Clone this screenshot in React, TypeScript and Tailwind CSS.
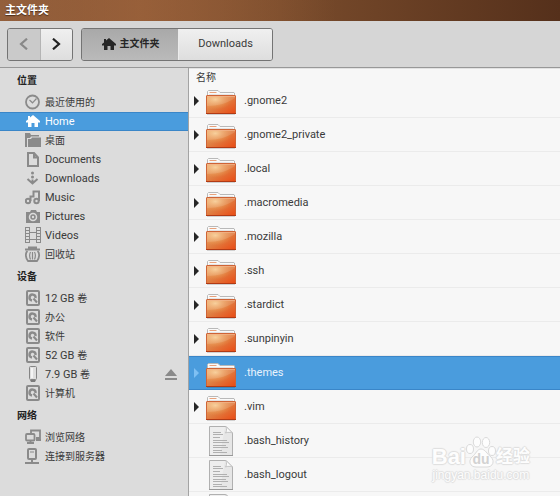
import type { ReactNode } from 'react';

const ICON = '#8a8a8a';

type Kind =
  | 'recent' | 'home' | 'desktop' | 'document' | 'download' | 'music' | 'camera'
  | 'video' | 'trash' | 'disk' | 'usb' | 'network' | 'server';

function HomeShape() {
  return <path fill="currentColor" d="M8 2 5 4.600V3H3v3.400L1 8v1.500h2V14h3.500v-4h3v4H13V9.500h2V8z" />;
}

const shapes: Record<Kind, ReactNode> = {
  recent: (
    <g fill="none">
      <circle cx="7.500" cy="8" r="6.500" stroke={ICON} strokeWidth="1.800" />
      <path d="M4.500 6 7.500 8.800 11.500 4.500" stroke={ICON} strokeWidth="1.200" />
    </g>
  ),
  home: <HomeShape />,
  desktop: <path fill={ICON} d="M0 1h5l1 2h8v1.500H6L5 6H2v9H0zM3 7h3l1-1.500h9V15H3z" />,
  document: <path fill="none" stroke={ICON} strokeWidth="2" d="M3 2h6l4 4.500V15H3zM9 2v4.500h4" />,
  download: (
    <g fill="none" stroke={ICON} strokeWidth="2">
      <circle cx="7.500" cy="3" r="1.500" fill={ICON} stroke="none" />
      <circle cx="7.500" cy="7" r="1.500" fill={ICON} stroke="none" />
      <path d="M2.500 9 7.500 13.500 12.500 9M7.500 9.500v4" />
    </g>
  ),
  music: (
    <g fill="none" stroke={ICON} strokeWidth="2">
      <circle cx="3" cy="12" r="2.200" />
      <circle cx="11.500" cy="12" r="2.200" />
      <path d="M5.500 12V7.500h3v-5H14V12" />
    </g>
  ),
  camera: (
    <g>
      <path fill={ICON} d="M1 4h4l1-2h5l1 2h3v11H1z" />
      <circle cx="8" cy="9" r="3.500" fill="none" stroke="#dcdcdc" strokeWidth="1.500" />
      <circle cx="8" cy="9" r="1.200" fill="#dcdcdc" />
    </g>
  ),
  video: (
    <g fill="none" stroke={ICON}>
      <path d="M.5 0v16M4.500 0v16M11.500 0v16M15.500 0v16M5 5.500h6M5 12.500h6" />
      <path d="M2.500 0v16M13.500 0v16" strokeWidth="3" strokeDasharray="1 2" />
    </g>
  ),
  trash: (
    <g fill="none" stroke={ICON}>
      <path d="M3 1.500h9M0 3.500h15" strokeWidth="1.800" />
      <path d="M2.500 5C0 7 .5 12 3 15h9c2.500-3 3-8 .5-10" strokeWidth="1.800" />
      <path d="M5.500 6C4.200 8.500 4.400 11 5.500 13.500M9.500 6c1.300 2.500 1.100 5 0 7.500M7.500 6v7.500" strokeWidth="1.200" />
    </g>
  ),
  disk: (
    <g fill="none">
      <rect x="2" y="1" width="12" height="14" rx="1" stroke={ICON} strokeWidth="2" />
      <path d="M7 10.500A3 3 0 1 1 10.500 8" stroke={ICON} strokeWidth="2.400" />
      <path d="M8.500 8.500 12 12.500" stroke={ICON} strokeWidth="2" />
    </g>
  ),
  usb: (
    <g>
      <rect x="4.500" y=".5" width="7" height="13" rx="1" fill="#dedede" stroke="#858585" />
      <path d="M6 2h2v10H6z" fill="#f4f4f4" />
      <path d="M5 14h6l-1 2H6z" fill="#7b7b7b" />
    </g>
  ),
  network: (
    <g fill="none" stroke={ICON} strokeWidth="1.800">
      <path d="M6 4V1.500h9V9h-4" />
      <rect x="1" y="5" width="8.500" height="6.500" rx="1" />
      <path d="M2 14h7M5.500 11.500V14M11 11h5" />
    </g>
  ),
  server: (
    <g fill="none" stroke={ICON}>
      <rect x="3" y="1" width="8" height="10" rx="1" strokeWidth="2" />
      <path d="M5 4h4" />
      <path d="M7 11v4M0 15h14" strokeWidth="2" />
    </g>
  ),
};

type Place = { kind: Kind; label: string; cjk?: string; selected?: boolean; eject?: boolean };

const groups: { title: string; items: Place[] }[] = [
  {
    title: '位置',
    items: [
      { kind: 'recent', label: '', cjk: '最近使用的' },
      { kind: 'home', label: 'Home', selected: true },
      { kind: 'desktop', label: '', cjk: '桌面' },
      { kind: 'document', label: 'Documents' },
      { kind: 'download', label: 'Downloads' },
      { kind: 'music', label: 'Music' },
      { kind: 'camera', label: 'Pictures' },
      { kind: 'video', label: 'Videos' },
      { kind: 'trash', label: '', cjk: '回收站' },
    ],
  },
  {
    title: '设备',
    items: [
      { kind: 'disk', label: '12 GB ', cjk: '卷' },
      { kind: 'disk', label: '', cjk: '办公' },
      { kind: 'disk', label: '', cjk: '软件' },
      { kind: 'disk', label: '52 GB ', cjk: '卷' },
      { kind: 'usb', label: '7.9 GB ', cjk: '卷', eject: true },
      { kind: 'disk', label: '', cjk: '计算机' },
    ],
  },
  {
    title: '网络',
    items: [
      { kind: 'network', label: '', cjk: '浏览网络' },
      { kind: 'server', label: '', cjk: '连接到服务器' },
    ],
  },
];

const folders = ['.gnome2', '.gnome2_private', '.local', '.macromedia', '.mozilla', '.ssh', '.stardict', '.sunpinyin', '.themes', '.vim'];
const files = ['.bash_history', '.bash_logout', ''];

function FolderIcon() {
  return (
    <svg className="mt-1 h-[25px] w-[30px]" viewBox="0 0 30 25" aria-hidden="true">
      <defs>
        <linearGradient id="front" x1="0" y1="0" x2="1" y2="1">
          <stop offset="0" stopColor="#eda869" />
          <stop offset=".5" stopColor="#e07c40" />
          <stop offset="1" stopColor="#ea4a14" />
        </linearGradient>
        <radialGradient id="shine" cx=".3" cy=".2" r=".6">
          <stop offset="0" stopColor="#fbd9a0" stopOpacity=".8" />
          <stop offset="1" stopColor="#f0a050" stopOpacity="0" />
        </radialGradient>
      </defs>
      <path d="M1.500 8V1.500l1-1H12l2 2h14l.5.5v5z" fill="#fafafa" stroke="#b9b9b9" />
      <path d="M3.500 2.500h7" stroke="#e8a27c" />
      <path d="M3 4.500h24" stroke="#e4e4e4" />
      <rect x=".5" y="5.500" width="29" height="18" rx=".5" fill="url(#front)" stroke="#cf6436" />
      <rect x="1" y="6" width="28" height="17" fill="url(#shine)" />
      <path d="M1 16C12 16 22 13 29 8V6H1z" fill="#fff" opacity=".12" />
      <path d="M1 6.500h28" stroke="#f3b58c" opacity=".7" />
      <path d="M0 23.500h30" stroke="#b23a14" />
      <path d="M1 24.500h28" stroke="#000" opacity=".15" />
    </svg>
  );
}

function FileIcon() {
  return (
    <svg className="mx-[3px] h-[30px] w-6" viewBox="0 0 24 30" aria-hidden="true">
      <path d="M.5.5H17L23.500 7v22.500H.5z" fill="#e6e6e6" stroke="#b0b0b0" />
      <path d="M1 1h15l-5 28H1z" fill="#f3f3f3" opacity=".6" />
      <path d="M17 .5c1 3 .5 5-.5 6.500 2-1 5-.8 7 0z" fill="#fbfbfb" stroke="#c4c4c4" />
      <path d="M4 6.500h8M4 8.500h10M4 11.500h7M4 14.500h14M4 16.500h16M4 19.500h13M4 21.500h15M4 24.500h9M4 26.500h14" stroke="#b0b0b0" />
      <path d="M0 29.500h24" stroke="#989898" />
    </svg>
  );
}

function Row({ name, folder, selected }: { name: string; folder?: boolean; selected?: boolean }) {
  return (
    <li
      className={
        selected
          ? 'flex h-[34px] items-center border-y border-[#3a86c8] bg-[#4a9cdd] pl-[5px] text-[#e8f3fc]'
          : 'flex h-[34px] items-center border-b border-[#ebebeb] pl-[5px]'
      }
    >
      <span className="flex w-3 items-center">
        {folder && (
          <button type="button" aria-label={'展开 ' + name} className={selected ? 'text-[#7fc0f3]' : 'text-[#262626]'}>
            <svg className="h-[10px] w-[5px]" viewBox="0 0 5 10" aria-hidden="true">
              <path d="M0 0 5 5 0 10z" fill="currentColor" />
            </svg>
          </button>
        )}
      </span>
      {folder ? <FolderIcon /> : <FileIcon />}
      {name && <span className="pl-2">{name}</span>}
    </li>
  );
}

function Watermark() {
  return (
    <div className="pointer-events-none absolute right-[30px] bottom-[14px] flex flex-col items-center text-[#fdfdfd] [text-shadow:1px_0_1px_#dedede,-1px_0_1px_#dedede,0_1px_1px_#dedede,0_-1px_1px_#dedede]">
      <div className="flex items-end font-['Liberation_Sans','Noto_Sans_CJK_SC',sans-serif] font-bold">
        <span className="text-[22px] leading-[22px]">Bai</span>
        <svg className="h-8 w-[30px]" viewBox="0 0 30 32" aria-hidden="true">
          <g fill="#fdfdfd" stroke="#dadada">
            <ellipse cx="4" cy="13" rx="3.500" ry="4.500" />
            <ellipse cx="11" cy="6" rx="3.700" ry="5" />
            <ellipse cx="20" cy="6.500" rx="3.700" ry="5" />
            <ellipse cx="26" cy="15" rx="3.500" ry="4.500" />
            <path d="M15 13c-4 0-5 5-9 8-4 4-2 10 4 10h11c6 0 8-6 4-10-4-3-6-8-10-8z" />
          </g>
          <text className="[text-shadow:none]" x="15" y="28" textAnchor="middle" fontSize="14" fill="#d2d2d2">du</text>
        </svg>
        <span className="text-[17px] leading-[22px]">经验</span>
      </div>
      <span className="font-['Liberation_Sans',sans-serif] text-xs leading-[14px]">jingyan.baidu.com</span>
    </div>
  );
}

export default function App() {
  return (
    <div className="flex h-screen flex-col overflow-hidden bg-[#d6d6d6] font-['Roboto','Noto_Sans_CJK_SC',sans-serif] text-[11px] leading-[18px] text-[#3a3a3a]">
      <header className="h-[21px] shrink-0 bg-linear-to-r from-[#935f3c] via-[#7a4c2c] to-[#55301b]">
        <div className="flex h-full items-center bg-linear-to-r from-transparent via-[#a3663d]/60 via-25% to-transparent to-60% pl-[5px]">
          <h1 className="font-bold text-white [text-shadow:0_1px_1px_#4a2c18]">主文件夹</h1>
        </div>
      </header>

      <nav className="flex h-[47px] shrink-0 items-center gap-2 border-b border-[#989898] px-[7px]">
        <div className="flex h-[33px] w-[66px] overflow-hidden rounded-[3px] border border-[#747474]">
          <button type="button" aria-label="后退" className="flex flex-1 items-center justify-center border-r border-[#b4b4b4] bg-[#cacaca]">
            <svg className="h-3 w-[9px]" viewBox="0 0 9 12" aria-hidden="true">
              <path d="M8 .7 2 6 8 11.300" fill="none" stroke="#888" strokeWidth="2.200" />
            </svg>
          </button>
          <button type="button" aria-label="前进" className="flex flex-1 items-center justify-center bg-linear-to-b from-[#f0f0f0] to-[#dedede]">
            <svg className="h-3 w-[9px]" viewBox="0 0 9 12" aria-hidden="true">
              <path d="M1 .7 7 6 1 11.300" fill="none" stroke="#222" strokeWidth="2.200" />
            </svg>
          </button>
        </div>
        <div className="flex h-[33px] w-48 overflow-hidden rounded-[3px] border border-[#747474]">
          <button type="button" className="flex w-24 items-center justify-center gap-[3px] bg-linear-to-b from-[#a9a9a9] to-[#bababa] text-[10px] font-bold text-[#262626]">
            <svg className="size-4" viewBox="0 0 16 16" aria-hidden="true"><HomeShape /></svg>
            主文件夹
          </button>
          <button type="button" className="flex flex-1 items-center justify-center border-l border-[#ececec] bg-linear-to-b from-[#f0f0f0] to-[#dedede]">
            Downloads
          </button>
        </div>
      </nav>

      <div className="flex min-h-0 flex-1">
        <aside className="w-[189px] shrink-0 border-r border-[#a3a3a3] bg-[#dcdcdc]">
          {groups.map((group) => (
            <section key={group.title}>
              <h2 className="h-[25px] pl-[17px] text-[10px] leading-[25px] font-bold text-[#222]">{group.title}</h2>
              <ul>
                {group.items.map((item, i) => (
                  <li
                    key={i}
                    className={
                      item.selected
                        ? 'flex h-[19px] items-center border-y border-[#3a86c8] bg-[#4a9cdd] pr-[11px] pl-[25px] text-white'
                        : 'flex h-[19px] items-center pr-[11px] pl-[25px]'
                    }
                  >
                    <a href="#" className="flex flex-1 items-center gap-1">
                      <svg className="mb-px size-4" viewBox="0 0 16 16" aria-hidden="true">{shapes[item.kind]}</svg>
                      <span className="whitespace-pre">
                        {item.label}
                        {item.cjk && <span className="text-[10px]">{item.cjk}</span>}
                      </span>
                    </a>
                    {item.eject && (
                      <button type="button" aria-label="弹出">
                        <svg className="h-3 w-3" viewBox="0 0 12 12" aria-hidden="true">
                          <path d="M6 0 12 7H0zM0 9h12v2H0z" fill={ICON} />
                        </svg>
                      </button>
                    )}
                  </li>
                ))}
              </ul>
            </section>
          ))}
        </aside>

        <main className="relative min-w-0 flex-1 overflow-hidden bg-[#f7f7f7]">
          <h2 className="h-4 border-t border-[#e2e2e2] pl-[7px] text-[10px]">名称</h2>
          <ul>
            {folders.map((name) => <Row key={name} name={name} folder selected={name === '.themes'} />)}
            {files.map((name) => <Row key={name} name={name} />)}
          </ul>
          <Watermark />
        </main>
      </div>
    </div>
  );
}
